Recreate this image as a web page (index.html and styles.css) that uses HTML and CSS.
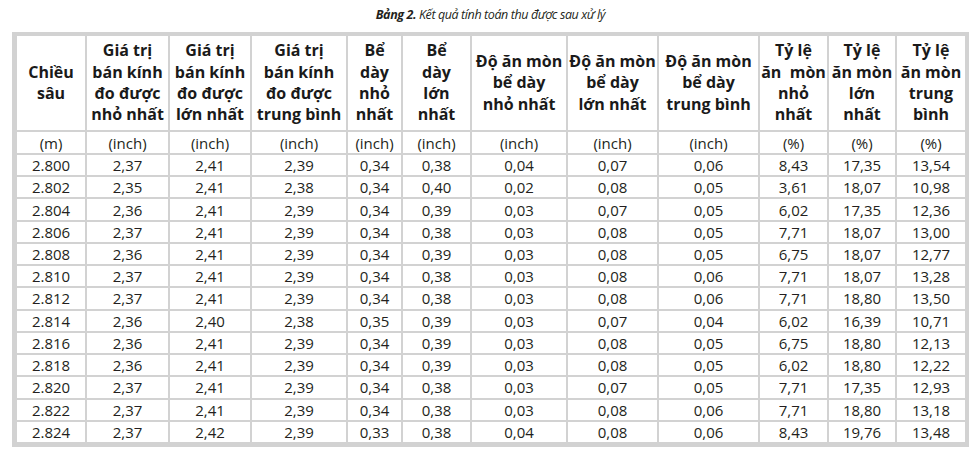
FILE: index.html
```html
<!DOCTYPE html>
<html lang="vi">
<head>
<meta charset="utf-8">
<title>Bảng 2</title>
<link rel="stylesheet" href="styles.css">
</head>
<body>
<div class="caption"><b>Bảng 2.</b> Kết quả tính toán thu được sau xử lý</div>
<div class="tbl">
  <div class="th">Chiều<br>sâu</div>
  <div class="th">Giá trị<br>bán kính<br>đo được<br>nhỏ nhất</div>
  <div class="th">Giá trị<br>bán kính<br>đo được<br>lớn nhất</div>
  <div class="th">Giá trị<br>bán kính<br>đo được<br>trung bình</div>
  <div class="th">Bể<br>dày<br>nhỏ<br>nhất</div>
  <div class="th">Bể<br>dày<br>lớn<br>nhất</div>
  <div class="th">Độ ăn mòn<br>bể dày<br>nhỏ nhất</div>
  <div class="th">Độ ăn mòn<br>bể dày<br>lớn nhất</div>
  <div class="th">Độ ăn mòn<br>bể dày<br>trung bình</div>
  <div class="th">Tỷ lệ<br>ăn&nbsp; mòn<br>nhỏ<br>nhất</div>
  <div class="th">Tỷ lệ<br>ăn mòn<br>lớn<br>nhất</div>
  <div class="th">Tỷ lệ<br>ăn mòn<br>trung<br>bình</div>

  <div class="td">(m)</div><div class="td">(inch)</div><div class="td">(inch)</div><div class="td">(inch)</div><div class="td">(inch)</div><div class="td">(inch)</div><div class="td">(inch)</div><div class="td">(inch)</div><div class="td">(inch)</div><div class="td">(%)</div><div class="td">(%)</div><div class="td">(%)</div>

  <div class="td">2.800</div><div class="td">2,37</div><div class="td">2,41</div><div class="td">2,39</div><div class="td">0,34</div><div class="td">0,38</div><div class="td">0,04</div><div class="td">0,07</div><div class="td">0,06</div><div class="td">8,43</div><div class="td">17,35</div><div class="td">13,54</div>
  <div class="td">2.802</div><div class="td">2,35</div><div class="td">2,41</div><div class="td">2,38</div><div class="td">0,34</div><div class="td">0,40</div><div class="td">0,02</div><div class="td">0,08</div><div class="td">0,05</div><div class="td">3,61</div><div class="td">18,07</div><div class="td">10,98</div>
  <div class="td">2.804</div><div class="td">2,36</div><div class="td">2,41</div><div class="td">2,39</div><div class="td">0,34</div><div class="td">0,39</div><div class="td">0,03</div><div class="td">0,07</div><div class="td">0,05</div><div class="td">6,02</div><div class="td">17,35</div><div class="td">12,36</div>
  <div class="td">2.806</div><div class="td">2,37</div><div class="td">2,41</div><div class="td">2,39</div><div class="td">0,34</div><div class="td">0,38</div><div class="td">0,03</div><div class="td">0,08</div><div class="td">0,05</div><div class="td">7,71</div><div class="td">18,07</div><div class="td">13,00</div>
  <div class="td">2.808</div><div class="td">2,36</div><div class="td">2,41</div><div class="td">2,39</div><div class="td">0,34</div><div class="td">0,39</div><div class="td">0,03</div><div class="td">0,08</div><div class="td">0,05</div><div class="td">6,75</div><div class="td">18,07</div><div class="td">12,77</div>
  <div class="td">2.810</div><div class="td">2,37</div><div class="td">2,41</div><div class="td">2,39</div><div class="td">0,34</div><div class="td">0,38</div><div class="td">0,03</div><div class="td">0,08</div><div class="td">0,06</div><div class="td">7,71</div><div class="td">18,07</div><div class="td">13,28</div>
  <div class="td">2.812</div><div class="td">2,37</div><div class="td">2,41</div><div class="td">2,39</div><div class="td">0,34</div><div class="td">0,38</div><div class="td">0,03</div><div class="td">0,08</div><div class="td">0,06</div><div class="td">7,71</div><div class="td">18,80</div><div class="td">13,50</div>
  <div class="td">2.814</div><div class="td">2,36</div><div class="td">2,40</div><div class="td">2,38</div><div class="td">0,35</div><div class="td">0,39</div><div class="td">0,03</div><div class="td">0,07</div><div class="td">0,04</div><div class="td">6,02</div><div class="td">16,39</div><div class="td">10,71</div>
  <div class="td">2.816</div><div class="td">2,36</div><div class="td">2,41</div><div class="td">2,39</div><div class="td">0,34</div><div class="td">0,39</div><div class="td">0,03</div><div class="td">0,08</div><div class="td">0,05</div><div class="td">6,75</div><div class="td">18,80</div><div class="td">12,13</div>
  <div class="td">2.818</div><div class="td">2,36</div><div class="td">2,41</div><div class="td">2,39</div><div class="td">0,34</div><div class="td">0,39</div><div class="td">0,03</div><div class="td">0,08</div><div class="td">0,05</div><div class="td">6,02</div><div class="td">18,80</div><div class="td">12,22</div>
  <div class="td">2.820</div><div class="td">2,37</div><div class="td">2,41</div><div class="td">2,39</div><div class="td">0,34</div><div class="td">0,38</div><div class="td">0,03</div><div class="td">0,07</div><div class="td">0,05</div><div class="td">7,71</div><div class="td">17,35</div><div class="td">12,93</div>
  <div class="td">2.822</div><div class="td">2,37</div><div class="td">2,41</div><div class="td">2,39</div><div class="td">0,34</div><div class="td">0,38</div><div class="td">0,03</div><div class="td">0,08</div><div class="td">0,06</div><div class="td">7,71</div><div class="td">18,80</div><div class="td">13,18</div>
  <div class="td">2.824</div><div class="td">2,37</div><div class="td">2,42</div><div class="td">2,39</div><div class="td">0,33</div><div class="td">0,38</div><div class="td">0,04</div><div class="td">0,08</div><div class="td">0,06</div><div class="td">8,43</div><div class="td">19,76</div><div class="td">13,48</div>
</div>
</body>
</html>
```

FILE: styles.css
```css
html, body {
  margin: 0;
  padding: 0;
  background: #ffffff;
}

body {
  font-family: "Open Sans", "Liberation Sans", sans-serif;
  color: #231f20;
}

.caption {
  width: 957px;
  margin-left: 12px;
  height: 32px;
  box-sizing: border-box;
  padding-top: 6px;
  text-align: center;
  font-size: 12.5px;
  line-height: 18px;
  font-style: italic;
  letter-spacing: -0.4px;
  color: #231f20;
}

.caption b {
  font-weight: 700;
}

.tbl {
  display: grid;
  grid-template-columns: 68px 81px 80px 94px 53px 67px 94px 89px 99px 67px 66px 68px;
  grid-template-rows: 94px 21px repeat(13, 1fr);
  gap: 2px;
  width: 957px;
  height: 415px;
  box-sizing: border-box;
  padding: 4px 4px 5px 5px;
  margin-left: 12px;
  background: #d2d2d2;
}

.th,
.td {
  background: #ffffff;
  display: flex;
  align-items: center;
  justify-content: center;
  text-align: center;
  white-space: nowrap;
}

.th {
  font-weight: 700;
  font-size: 16px;
  line-height: 21.3px;
  color: #1a1a1a;
}

.td {
  font-size: 15px;
  line-height: 20px;
}
```
